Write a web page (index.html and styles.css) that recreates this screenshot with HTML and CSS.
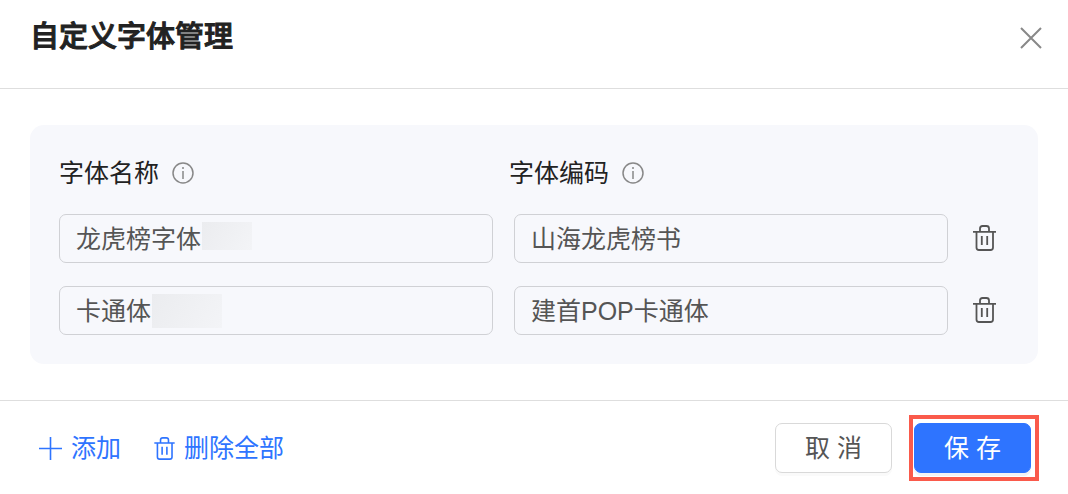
FILE: index.html
```html
<!DOCTYPE html>
<html lang="zh-CN">
<head>
<meta charset="utf-8">
<title>自定义字体管理</title>
<link rel="stylesheet" href="styles.css">
</head>
<body>
<svg class="sprite" aria-hidden="true">
  <symbol id="trash" viewBox="0 0 23 26">
    <path d="M0 6.800H23M7 6.500V3.500Q7 1 9.500 1H13.500Q16 1 16 3.500V6.500M3.500 7V22.500Q3.500 25 6 25H17.500Q20 25 20 22.500V7M8.800 11V20M14.200 11V20"/>
  </symbol>
  <symbol id="info" viewBox="0 0 22 22">
    <circle cx="11" cy="11" r="10"/>
    <path d="M11 9V17M11 5V7"/>
  </symbol>
</svg>
<div class="dialog" role="dialog" aria-labelledby="dialog-title">
  <header class="dialog-header">
    <h1 class="title" id="dialog-title">自定义字体管理</h1>
    <button class="icon-button close" type="button" aria-label="关闭">
      <svg class="close-icon" viewBox="0 0 22 22"><path d="M1 1L21 21M21 1L1 21"/></svg>
    </button>
  </header>
  <main class="dialog-body">
    <section class="panel">
      <div class="labels">
        <div class="label"><span id="name-label">字体名称</span><svg class="info-icon"><use href="#info"/></svg></div>
        <div class="label"><span id="code-label">字体编码</span><svg class="info-icon"><use href="#info"/></svg></div>
      </div>
      <div class="row">
        <div class="field"><input class="input" type="text" value="龙虎榜字体" aria-labelledby="name-label"><span class="mask mask-short"></span></div>
        <div class="field"><input class="input" type="text" value="山海龙虎榜书" aria-labelledby="code-label"></div>
        <button class="icon-button" type="button" aria-label="删除"><svg class="trash-icon"><use href="#trash"/></svg></button>
      </div>
      <div class="row">
        <div class="field"><input class="input" type="text" value="卡通体" aria-labelledby="name-label"><span class="mask mask-long"></span></div>
        <div class="field"><input class="input" type="text" value="建首POP卡通体" aria-labelledby="code-label"></div>
        <button class="icon-button" type="button" aria-label="删除"><svg class="trash-icon"><use href="#trash"/></svg></button>
      </div>
    </section>
  </main>
  <footer class="dialog-footer">
    <div class="links">
      <button class="link-button" type="button"><svg class="plus-icon" viewBox="0 0 23 23"><path d="M11.500 0V23M0 11.500H23"/></svg>添加</button>
      <button class="link-button" type="button"><svg class="trash-icon trash-icon-small"><use href="#trash"/></svg>删除全部</button>
    </div>
    <div class="actions">
      <button class="button" type="button">取 消</button>
      <button class="button button-primary" type="button">保 存</button>
    </div>
  </footer>
</div>
</body>
</html>
```

FILE: styles.css
```css
* {
  box-sizing: border-box;
}

body {
  margin: 0;
  background: #fff;
  color: #222;
  font-family: "Liberation Sans", "Noto Sans CJK SC", sans-serif;
  font-size: 25px;
  line-height: 36px;
}

button,
input {
  margin: 0;
  font: inherit;
}

svg {
  display: block;
  flex: none;
  fill: none;
  stroke: currentColor;
  stroke-width: 2;
}

.sprite {
  position: absolute;
  width: 0;
  height: 0;
}

.dialog-header {
  display: flex;
  align-items: flex-start;
  justify-content: space-between;
  padding: 19px 26px 33px 30px;
  border-bottom: 1px solid #dedede;
}

.title {
  margin: 0;
  font-size: 29px;
  font-weight: 500;
  line-height: 36px;
  -webkit-text-stroke: 1px currentColor;
}

.icon-button {
  display: flex;
  padding: 0;
  border: 0;
  background: none;
  color: #555;
  cursor: pointer;
}

.close {
  padding-top: 8px;
  color: #888;
}

.close-icon {
  width: 22px;
  height: 22px;
}

.dialog-body {
  padding: 36px 30px;
}

.panel {
  display: flex;
  flex-direction: column;
  gap: 23px;
  padding: 30px 29px 29px;
  border-radius: 14px;
  background: #f7f8fc;
}

.labels {
  display: grid;
  grid-template-columns: 1fr 1fr;
  padding-right: 50px;
}

.label {
  display: flex;
  align-items: center;
  gap: 13px;
}

.info-icon {
  width: 22px;
  height: 22px;
  color: #888;
  stroke-width: 1.5;
}

.row {
  display: grid;
  grid-template-columns: 1fr 1fr 36px;
  column-gap: 21px;
  align-items: center;
  padding-right: 4px;
}

.row .icon-button {
  padding: 0 0 2px 4px;
}

.field {
  position: relative;
}

.input {
  display: block;
  width: 100%;
  height: 49px;
  padding: 0 16px 4px;
  border: 1px solid #d0d1d5;
  border-radius: 7px;
  background: transparent;
  color: #555;
}

.mask {
  position: absolute;
  top: 8px;
  background: linear-gradient(120deg, #ebecef, #f3f4f7);
}

.mask-short {
  left: 143px;
  width: 50px;
  height: 28px;
}

.mask-long {
  left: 93px;
  width: 70px;
  height: 34px;
}

.trash-icon {
  width: 23px;
  height: 26px;
  stroke-width: 1.8;
}

.trash-icon-small {
  width: 21px;
  height: 23px;
}

.dialog-footer {
  display: flex;
  align-items: center;
  justify-content: space-between;
  padding: 22px 37px 21px 39px;
  border-top: 1px solid #dedede;
}

.links {
  display: flex;
  gap: 33px;
}

.link-button {
  display: flex;
  align-items: center;
  gap: 9px;
  padding: 0;
  border: 0;
  background: none;
  color: #2e74ff;
  cursor: pointer;
}

.plus-icon {
  width: 23px;
  height: 23px;
  stroke-width: 1.6;
}

.actions {
  display: flex;
  gap: 22px;
}

.button {
  position: relative;
  width: 117px;
  height: 50px;
  padding: 0;
  border: 1px solid #d9d9d9;
  border-radius: 7px;
  background: #fff;
  box-shadow: 0 3px 0 #fafafa;
  color: #555;
  cursor: pointer;
}

.button-primary {
  border-color: #2e74ff;
  background: #2e74ff;
  box-shadow: 0 3px 0 #f2f3f5;
  color: #fff;
}

.button-primary::after {
  content: "";
  position: absolute;
  inset: -9px -9px -9px -6px;
  border: 4px solid #fa5a4b;
}
```
